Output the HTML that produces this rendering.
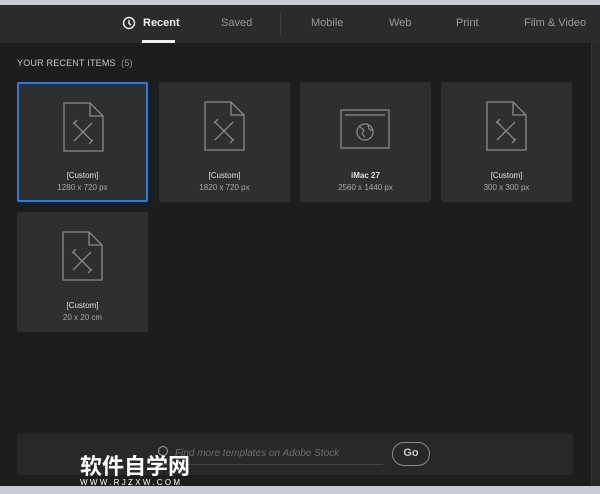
<!DOCTYPE html>
<html><head><meta charset="utf-8"><style>
*{margin:0;padding:0;box-sizing:border-box}
body{width:600px;height:494px;background:#1d1d1d;font-family:"Liberation Sans",sans-serif;position:relative;overflow:hidden}
.top{position:absolute;left:0;top:0;width:600px;height:5px;background:#c8ccd2}
.hdr{position:absolute;left:0;top:5px;width:600px;height:38px;background:#2b2b2b}
.tab{position:absolute;top:12px;font-size:11px;color:#9a9a9a}
.sb{position:absolute;left:591px;top:43px;width:9px;height:443px;background:#282828;border-left:1px solid #333}
.ttl{position:absolute;left:17px;top:58px;font-size:9px;color:#c8c8c8;letter-spacing:0.2px}
.card{position:absolute;width:131px;height:120px;background:#2f2f2f;border-radius:2px;text-align:center}
.card.sel{border:2px solid #2d7be0}
.card svg{position:absolute;left:44px;top:18px}
.n{position:absolute;left:0;right:0;top:89px;font-size:8px;color:#e0e0e0}
.s{position:absolute;left:0;right:0;top:101px;font-size:8px;color:#a8a8a8}
.search{position:absolute;left:17px;top:434px;width:556px;height:41px;background:#282828;border-radius:2px}
.go{position:absolute;left:392px;top:442px;width:38px;height:24px;border:1.5px solid #8a8a8a;border-radius:12px;color:#c8c8c8;font-size:11px;font-weight:bold;text-align:center;line-height:21px}
.bot{position:absolute;left:0;top:486px;width:600px;height:8px;background:#c8ccd2}
.wm{position:absolute;left:80px;top:452px;font-family:"Noto Sans CJK SC",sans-serif;font-size:22px;font-weight:bold;color:#fff;line-height:26px;letter-spacing:0px}
.wm2{position:absolute;left:80px;top:478px;font-size:8px;color:#fff;letter-spacing:2.3px}
</style></head><body>
<div class="top"></div>
<div class="hdr">
<svg style="position:absolute;left:122px;top:11px" width="14" height="14"><circle cx="7" cy="7" r="5.5" fill="none" stroke="#eee" stroke-width="1.5"/><path d="M7 4v3.5l2 1.5" fill="none" stroke="#eee" stroke-width="1.5"/></svg>
<div class="tab" style="left:143px;color:#f0f0f0;font-weight:bold">Recent</div>
<div style="position:absolute;left:142px;top:35px;width:33px;height:3px;background:#f0f0f0"></div>
<div class="tab" style="left:221px">Saved</div>
<div style="position:absolute;left:280px;top:8px;width:1px;height:22px;background:#444"></div>
<div class="tab" style="left:311px">Mobile</div>
<div class="tab" style="left:389px">Web</div>
<div class="tab" style="left:456px">Print</div>
<div class="tab" style="left:524px">Film &amp; Video</div>
</div>
<div class="sb"></div>
<div class="ttl">YOUR RECENT ITEMS &nbsp;<span style="color:#999">(5)</span></div>

<div class="card sel" style="left:17px;top:82px"><svg width="44" height="52" style="left:43px;top:17px"><path d="M2 2h26l13 13v35H2z M28 2v13h13" fill="none" stroke="#8a8a8a" stroke-width="1.3"/><path d="M12 22l18 18M30 22l-18 18M15 19l-4 4M27 43l4-4" stroke="#8a8a8a" stroke-width="1.3"/></svg><div class="n" style="top:87px">[Custom]</div><div class="s" style="top:99px">1280 x 720 px</div></div>
<div class="card" style="left:159px;top:82px"><svg width="44" height="52"><path d="M2 2h26l13 13v35H2z M28 2v13h13" fill="none" stroke="#8a8a8a" stroke-width="1.3"/><path d="M12 22l18 18M30 22l-18 18M15 19l-4 4M27 43l4-4" stroke="#8a8a8a" stroke-width="1.3"/></svg><div class="n">[Custom]</div><div class="s">1820 x 720 px</div></div>
<div class="card" style="left:300px;top:82px"><svg width="52" height="42" style="left:40px;top:27px"><rect x="1" y="1" width="48" height="38" fill="none" stroke="#8a8a8a" stroke-width="1.3"/><path d="M5 6h40" stroke="#8a8a8a" stroke-width="1.3"/><circle cx="25" cy="23" r="8" fill="none" stroke="#8a8a8a" stroke-width="1.3"/><path d="M20 18l4 3-2 4 3 3M28 16l1 4 4 2" fill="none" stroke="#8a8a8a" stroke-width="1.2"/></svg><div class="n" style="font-weight:bold">iMac 27</div><div class="s">2560 x 1440 px</div></div>
<div class="card" style="left:441px;top:82px"><svg width="44" height="52"><path d="M2 2h26l13 13v35H2z M28 2v13h13" fill="none" stroke="#8a8a8a" stroke-width="1.3"/><path d="M12 22l18 18M30 22l-18 18M15 19l-4 4M27 43l4-4" stroke="#8a8a8a" stroke-width="1.3"/></svg><div class="n">[Custom]</div><div class="s">300 x 300 px</div></div>
<div class="card" style="left:17px;top:212px"><svg width="44" height="52"><path d="M2 2h26l13 13v35H2z M28 2v13h13" fill="none" stroke="#8a8a8a" stroke-width="1.3"/><path d="M12 22l18 18M30 22l-18 18M15 19l-4 4M27 43l4-4" stroke="#8a8a8a" stroke-width="1.3"/></svg><div class="n">[Custom]</div><div class="s">20 x 20 cm</div></div>

<div class="search">
<svg style="position:absolute;left:140px;top:11px" width="14" height="14"><circle cx="6" cy="6" r="4.5" fill="none" stroke="#888" stroke-width="1.3"/></svg>
<div style="position:absolute;left:158px;top:14px;font-size:10px;font-style:italic;color:#6e6e6e">Find more templates on Adobe Stock</div>
<div style="position:absolute;left:140px;top:30px;width:226px;height:1px;background:#444"></div>
</div>
<div class="go">Go</div>
<div class="wm">软件自学网</div>
<div class="wm2">WWW.RJZXW.COM</div>
<div class="bot"></div>
</body></html>
